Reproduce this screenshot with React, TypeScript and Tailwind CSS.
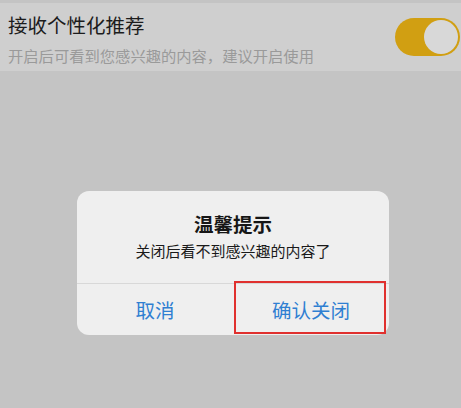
export default function App() {
  return (
    <div
      className="relative h-[408px] w-[461px] overflow-hidden bg-[#c4c4c4]"
      style={{ fontFamily: '"Noto Sans CJK SC", "Noto Sans", sans-serif' }}
    >
      <div className="mt-[3px] flex h-[68px] items-center justify-between bg-[#cfcfcf] pl-[8px] pr-[1px]">
        <div className="flex flex-col pt-[2px]">
          <div className="text-[19.5px] leading-[26px] text-[#1c1c1c]">接收个性化推荐</div>
          <div className="mt-[7px] text-[15.3px] leading-[20px] text-[#9a9a9a]">开启后可看到您感兴趣的内容，建议开启使用</div>
        </div>
        <div className="flex h-[38px] w-[65px] items-center justify-end rounded-full bg-[#d19f12] pr-[2px]">
          <div className="h-[34px] w-[34px] rounded-full bg-[#d8d8d8]" />
        </div>
      </div>

      <div className="absolute left-[77px] top-[191px] flex h-[144px] w-[312px] flex-col overflow-hidden rounded-[12px] bg-[#efefef]">
        <div className="flex h-[92px] flex-col items-center pt-[20px]">
          <div className="text-[19.5px] font-semibold leading-[26px] text-[#161616]">温馨提示</div>
          <div className="mt-[4px] text-[15px] leading-[20px] text-[#1a1a1a]">关闭后看不到感兴趣的内容了</div>
        </div>
        <div className="flex flex-1 border-t border-[#d8d8d8]">
          <button className="flex-1 text-[19.5px] text-[#2f7fd2]">取消</button>
          <button className="flex-1 text-[19.5px] text-[#2f7fd2]">确认关闭</button>
        </div>
      </div>

      <div className="absolute left-[234px] top-[281px] h-[53px] w-[152px] border-2 border-[#e0302e]" />
    </div>
  );
}
